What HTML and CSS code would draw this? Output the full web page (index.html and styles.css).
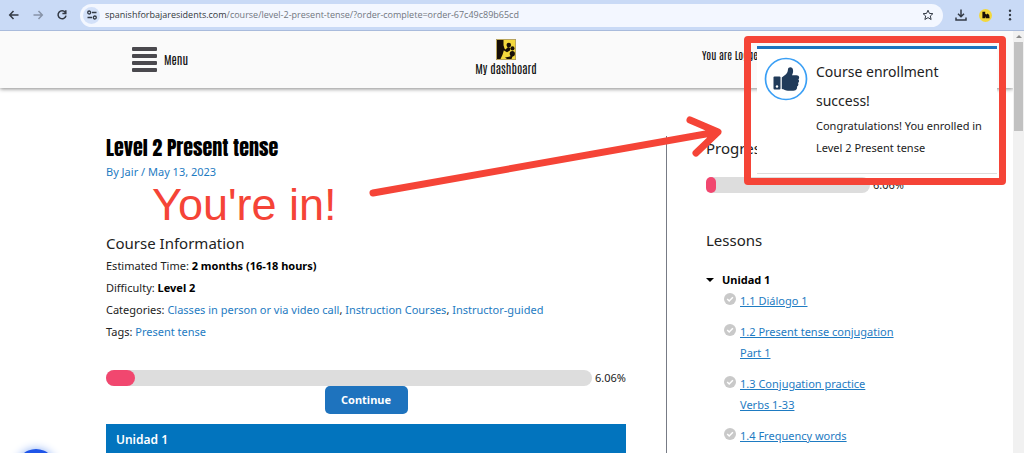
FILE: index.html
```html
<!DOCTYPE html>
<html lang="en">
<head>
<meta charset="utf-8">
<meta name="viewport" content="width=device-width, initial-scale=1">
<title>Level 2 Present tense</title>
<link rel="stylesheet" href="styles.css">
</head>
<body>
<div class="shell">
  <div class="toolbar">
    <button class="tool" aria-label="Back"><svg width="12" height="12" viewBox="0 0 12 12"><path d="M10.500 6H2M5.500 2L1.700 6l3.800 4" /></svg></button>
    <button class="tool tool-off" aria-label="Forward"><svg width="12" height="12" viewBox="0 0 12 12"><path d="M1.500 6H10M6.500 2l3.800 4-3.800 4" /></svg></button>
    <button class="tool" aria-label="Reload"><svg width="12" height="12" viewBox="0 0 12 12"><path d="M9.300 3.400A4 4 0 1 0 10 6.600M9.800 1.200v3.300H6.400" /></svg></button>
    <div class="address">
      <button class="site-info" aria-label="Site information"><svg width="12" height="12" viewBox="0 0 12 12"><path d="M6 3.500h4.500M1.500 8.500H6" /><circle cx="3.200" cy="3.500" r="1.500"/><circle cx="8.800" cy="8.500" r="1.500"/></svg></button>
      <div class="url"><span class="host">spanishforbajaresidents.com</span>/course/level-2-present-tense/?order-complete=order-67c49c89b65cd</div>
      <button class="tool star" aria-label="Bookmark"><svg width="12" height="12" viewBox="0 0 12 12"><path d="M6 1.200l1.400 3.200 3.500.3-2.600 2.300.8 3.500L6 8.600l-3.100 1.900.8-3.500L1.100 4.700l3.500-.3z"/></svg></button>
    </div>
    <button class="tool" aria-label="Downloads"><svg width="12" height="12" viewBox="0 0 12 12"><path d="M6 0.500v7M3 4.800l3 3 3-3M1 8.500v2.500h10V8.500"/></svg></button>
    <button class="profile" aria-label="Profile"><svg width="8" height="8" viewBox="0 0 20 20"><path fill="#170f08" d="M1 2h7v5l3 2 3-3 4 4 1 8H9v-5l-2 5H1z"/></svg></button>
    <button class="tool dots" aria-label="More"><svg width="12" height="12" viewBox="0 0 12 12"><circle cx="6" cy="1.800" r="1.200"/><circle cx="6" cy="6" r="1.200"/><circle cx="6" cy="10.200" r="1.200"/></svg></button>
  </div>

  <div class="window">
    <div class="page">
      <header class="site-header">
        <button class="menu"><span class="bars"><i></i><i></i><i></i><i></i></span>Menu</button>
        <a class="brand" href="#">
          <svg width="20" height="21" viewBox="0 0 20 20" preserveAspectRatio="none">
            <rect width="20" height="20" fill="#a4936a"/><rect x=".7" y=".7" width="18.600" height="18.600" fill="#f3d83d"/>
            <g fill="#170f08"><path d="M1 1h6.500v5l1 3-1 3-1 3-2 4H1z"/><circle cx="12.800" cy="5.800" r="2.300"/><circle cx="16.500" cy="9" r="2"/><circle cx="16.300" cy="14" r="2.600"/><path d="M7.500 8.500l2 1.500 2.500-2.500 2.500 1-.5 2.500-3 1.500-3-1.500z"/><path d="M9 17.500l4-.5 4-1.500-1.500 3.500H11z"/></g>
          </svg>
          My dashboard
        </a>
        <span class="login">You are Logged in</span>
      </header>

      <div class="columns">
        <main class="course">
          <h1>Level 2 Present tense</h1>
          <p class="byline"><a href="#">By Jair / May 13, 2023</a></p>
          <h2>Course Information</h2>
          <p>Estimated Time: <strong>2 months (16-18 hours)</strong></p>
          <p>Difficulty: <strong>Level 2</strong></p>
          <p>Categories: <a href="#">Classes in person or via video call</a>, <a href="#">Instruction Courses</a>, <a href="#">Instructor-guided</a></p>
          <p>Tags: <a href="#">Present tense</a></p>
          <div class="progress"><div class="track"><div class="fill" style="width:6.06%"></div></div><span>6.06%</span></div>
          <button class="continue">Continue</button>
          <section class="unit">Unidad 1</section>
        </main>
        <aside class="sidebar">
          <h2>Progress</h2>
          <div class="progress side"><div class="track"><div class="fill" style="width:6.06%"></div></div><span>6.06%</span></div>
          <h2 class="lessons-title">Lessons</h2>
          <details open>
            <summary>Unidad 1</summary>
            <ul>
              <li><svg width="12" height="12" viewBox="0 0 12 12"><circle cx="6" cy="6" r="6"/><path d="M3.200 6l2 2 3.700-3.800"/></svg><a href="#">1.1 Diálogo 1</a></li>
              <li><svg width="12" height="12" viewBox="0 0 12 12"><circle cx="6" cy="6" r="6"/><path d="M3.200 6l2 2 3.700-3.800"/></svg><a href="#">1.2 Present tense conjugation<br>Part 1</a></li>
              <li><svg width="12" height="12" viewBox="0 0 12 12"><circle cx="6" cy="6" r="6"/><path d="M3.200 6l2 2 3.700-3.800"/></svg><a href="#">1.3 Conjugation practice<br>Verbs 1-33</a></li>
              <li><svg width="12" height="12" viewBox="0 0 12 12"><circle cx="6" cy="6" r="6"/><path d="M3.200 6l2 2 3.700-3.800"/></svg><a href="#">1.4 Frequency words</a></li>
            </ul>
          </details>
        </aside>
      </div>
      <button class="chat" aria-label="Chat"></button>
    </div>
    <div class="scrollbar"><i class="up"></i><div class="thumb"></div></div>
  </div>

  <div class="toast" role="status">
    <svg class="thumb-up" width="44" height="44" viewBox="0 0 44 44"><circle cx="22" cy="22" r="20.500" fill="#fff" stroke="#3a9ff5" stroke-width="1.700"/><g fill="#213b5a"><path d="M9.500 20.500q0-1 1-1h5q1 0 1 1v11q0 1-1 1h-5q-1 0-1-1z"/><path d="M17.800 20.500l4.200-3.300c1.500-1.500 1.700-3 2-5 .3-2.500 4.300-2.800 5 .5.400 2-.3 4-1 5.500h4.500c3 0 3.300 3.300 1.800 4 1.200 1.300.9 3-.3 3.700.8 1.400.3 3-1 3.600.5 2.500-1.200 4.200-3.500 4.200H24c-2.500 0-4-1.500-6.200-1.700z"/></g><circle cx="13" cy="29.500" r="1.200" fill="#fff"/></svg>
    <div class="message"><h3>Course enrollment success!</h3><p>Congratulations! You enrolled in Level 2 Present tense</p></div>
  </div>
  <div class="frame"></div>
  <svg class="arrow" width="360" height="90" viewBox="0 0 360 90"><path d="M8 83L352 22M325 10l28 12-22 21"/></svg>
  <div class="note">You're in!</div>
</div>
</body>
</html>
```

FILE: styles.css
```css
* { box-sizing: border-box; }
body { margin: 0; font: 11px/22px "Noto Sans", "Open Sans", sans-serif; color: #222; background: #fff; }
button { border: 0; padding: 0; background: none; font: inherit; color: inherit; }
h1, h2, h3, p, ul { margin: 0; padding: 0; font-weight: 400; }
a { color: #1e7bc2; text-decoration: none; }
strong { color: #000; }
svg { display: block; flex: none; }
.shell { position: relative; display: flex; flex-direction: column; height: 100vh; overflow: hidden; }

.toolbar { display: flex; align-items: center; gap: 12px; flex: none; height: 31px; padding: 0 8px; background: #c9daf6; border-bottom: 1px solid #a9bbdc; }
.tool svg { fill: none; stroke: #333a45; stroke-width: 1.500; }
.tool-off svg { stroke: #8793a8; }
.dots svg { fill: #333a45; stroke: none; }
.star svg { stroke-width: 1; }
.address { display: flex; align-items: center; gap: 5px; flex: 1; min-width: 0; height: 23px; padding: 0 9px 0 3px; border-radius: 12px; background: #f3f7ff; }
.site-info { display: grid; place-items: center; width: 17px; height: 17px; border-radius: 50%; background: #d3e1f9; }
.site-info svg { fill: none; stroke: #333a45; stroke-width: 1.300; }
.url { flex: 1; overflow: hidden; white-space: nowrap; font-family: "Open Sans", sans-serif; font-size: 9px; color: #71767e; }
.host { color: #33373d; }
.profile { display: grid; place-items: center; width: 13px; height: 13px; border-radius: 50%; background: #f3d83d; }

.window { display: flex; flex: 1; min-height: 0; }
.page { position: relative; flex: 1; overflow: hidden; }
.scrollbar { display: flex; flex-direction: column; align-items: center; gap: 4px; width: 11px; padding-top: 4px; background: #f1f1f1; }
.up { border: 3px solid transparent; border-top: 0; border-bottom-color: #8a8a8a; }
.thumb { width: 9px; height: 89px; background: #c1c1c1; }

.site-header { display: grid; grid-template-columns: 343px 326px 1fr; align-items: center; height: 57px; background: #fafafa; box-shadow: 0 1px 4px #888; font: 500 12px/17px "Antonio", "Roboto Condensed", "Liberation Sans Narrow", sans-serif; color: #111; }
.menu { display: flex; align-items: center; gap: 7px; padding-left: 132px; }
.bars { display: flex; flex-direction: column; gap: 3px; width: 25px; }
.bars i { height: 4px; border-radius: 1px; background: #4a494e; }
.brand { display: flex; flex-direction: column; align-items: center; padding-bottom: 3px; color: #111; }
.login { white-space: nowrap; padding: 0 0 10px 33px; font-size: 11px; font-weight: 400; }

.columns { display: grid; grid-template-columns: 520px 1fr; gap: 40px; padding: 48px 60px 0 106px; }
h1 { font: 400 20px/24px "Anton", "Roboto Condensed", "Liberation Sans Narrow", sans-serif; color: #000; }
h2 { font-size: 15px; line-height: 24px; }
.byline { margin: 1px 0 48px; }
.progress { display: flex; align-items: center; gap: 3px; margin-top: 27px; line-height: 16px; }
.track { flex: 1; height: 16px; border-radius: 8px; background: #ddd; }
.fill { min-width: 10px; height: 16px; border-radius: 8px; background: #f1476f; }
.continue { display: block; width: 83px; height: 28px; margin: 0 auto 10px; border-radius: 5px; background: #1e73be; color: #fff; font-weight: 700; }
.unit { height: 80px; padding: 5px 10px; background: #0274be; color: #fff; font-weight: 600; font-size: 12px; }
.sidebar { padding-left: 39px; border-left: 1px solid #777b85; }
.side { width: 198px; margin-top: 17px; }
.lessons-title { margin: 35px 0 17px; }
summary { display: flex; align-items: center; gap: 8px; line-height: 21px; font-weight: 700; color: #000; }
summary::before { content: ""; border: 4px solid transparent; border-top-color: #000; border-bottom: 0; }
ul { list-style: none; }
li { display: flex; gap: 4px; width: 196px; margin-bottom: 10px; padding-left: 18px; line-height: 21px; }
li a { text-decoration: underline; }
li svg { margin-top: 3px; fill: #c9c9c9; }
li path { fill: none; stroke: #fff; stroke-width: 1.500; }
.chat { position: absolute; left: 16px; bottom: -36px; width: 40px; height: 40px; border-radius: 50%; background: #1f55e8; box-shadow: 0 0 10px #8aaef5; }

.toast { position: absolute; top: 46px; right: 27px; display: flex; gap: 8px; width: 240px; height: 128px; padding: 8px 0 0 7px; border-top: 3px solid #1e73be; border-bottom: 1px solid #ddd; background: #fff; }
.message { width: 172px; }
.toast h3 { font-size: 14px; line-height: 29px; }
.frame { position: absolute; top: 36px; right: 18px; width: 262px; height: 149px; border: 7px solid #f54437; border-radius: 4px; }
.arrow { position: absolute; left: 365px; top: 110px; fill: none; stroke: #f54437; stroke-width: 7; stroke-linecap: round; stroke-linejoin: round; }
.note { position: absolute; left: 152px; top: 180px; font: 45px/50px "Liberation Sans", Arial, sans-serif; color: #f54437; }
```
